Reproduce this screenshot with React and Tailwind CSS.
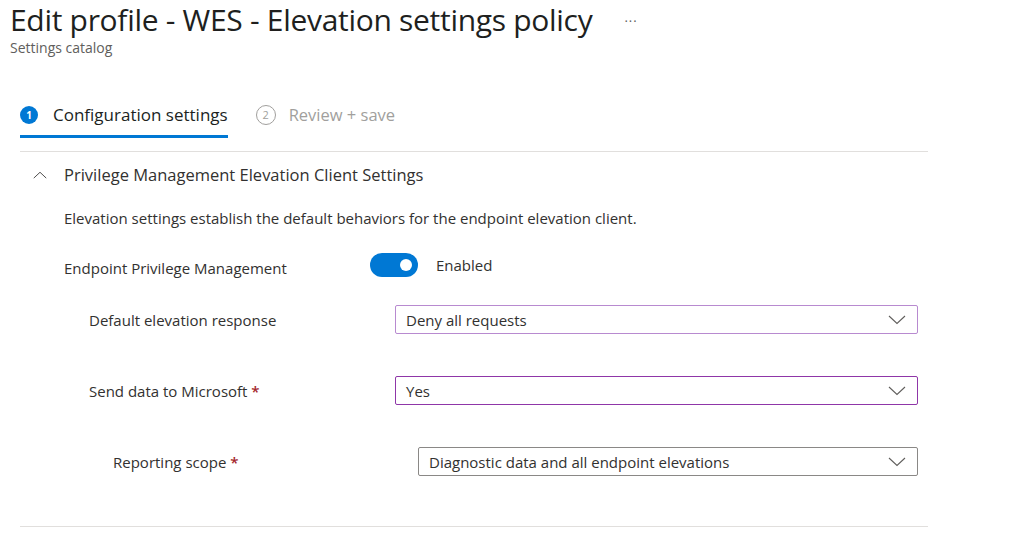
const font = { fontFamily: '"Open Sans", "Noto Sans", sans-serif' }

function Chevron({ up = false, className = '' }) {
  return (
    <svg viewBox="0 0 18 10" className={className} fill="none" stroke="currentColor" strokeWidth="1.1">
      <path d={up ? 'M1 9 L9 1.5 L17 9' : 'M1 1 L9 8.5 L17 1'} />
    </svg>
  )
}

function Select({ value, className = '', border = 'border-[#8a8886]' }) {
  return (
    <div className={`flex items-center justify-between h-[29px] border ${border} rounded-[2px] pl-[10px] pr-[11px] ${className}`}>
      <span className="text-[15px] leading-[20px] text-[#323130]">{value}</span>
      <Chevron className="w-[18px] h-[10px] text-[#605e5c]" />
    </div>
  )
}

export default function App() {
  return (
    <div className="w-[1024px] h-[539px] bg-white overflow-hidden text-[#323130] antialiased" style={font}>
      {/* header */}
      <div className="pl-[10px] pt-[1px]">
        <div className="flex items-center">
          <h1 className="text-[30px] leading-[38px] text-[#201f1e] tracking-[-0.3px]">Edit profile - WES - Elevation settings policy</h1>
          <span className="ml-[32px] mt-[4px] text-[13px] text-[#605e5c] tracking-[1px]">···</span>
        </div>
        <div className="text-[14px] leading-[18px] text-[#605e5c]">Settings catalog</div>
      </div>

      {/* wizard tabs */}
      <div className="ml-[20px] w-[908px] mt-[46px] border-b border-[#e1dfdd]">
        <div className="flex items-start">
          <div className="flex flex-col">
            <div className="flex items-center h-[24px]">
              <span className="w-[18px] h-[18px] rounded-full bg-[#0078d4] text-white text-[10px] font-bold flex items-center justify-center">1</span>
              <span className="ml-[15px] text-[17px] text-[#201f1e]">Configuration settings</span>
            </div>
            <div className="h-[3px] bg-[#0078d4] mt-[8px] mb-[13px]" />
          </div>
          <div className="flex items-center h-[24px] ml-[28px]">
            <span className="w-[20px] h-[20px] rounded-full border border-[#a19f9d] text-[#a19f9d] text-[11px] flex items-center justify-center">2</span>
            <span className="ml-[13px] text-[16.5px] text-[#a19f9d]">Review + save</span>
          </div>
        </div>
      </div>

      {/* section */}
      <div className="ml-[20px] w-[908px] border-b border-[#e1dfdd] pb-[50px]">
        <div className="flex items-center mt-[11px] h-[24px]">
          <Chevron up className="ml-[13px] w-[14px] h-[8px] text-[#323130]" />
          <span className="ml-[17px] text-[16.5px] text-[#323130]">Privilege Management Elevation Client Settings</span>
        </div>

        <div className="pl-[44px] mt-[21px] text-[15px] leading-[20px]">
          Elevation settings establish the default behaviors for the endpoint elevation client.
        </div>

        <div className="pl-[44px] mt-[23px] flex items-center">
          <span className="w-[306px] text-[15px] leading-[20px] pt-[7px]">Endpoint Privilege Management</span>
          <div className="w-[48px] h-[24px] rounded-full bg-[#0078d4] flex items-center justify-end pr-[6px]">
            <span className="w-[12px] h-[12px] rounded-full bg-white" />
          </div>
          <span className="ml-[18px] text-[15px] leading-[20px]">Enabled</span>
        </div>

        <div className="pl-[69px] mt-[27px] flex items-center">
          <span className="w-[306px] text-[15px] leading-[20px]">Default elevation response</span>
          <Select value="Deny all requests" className="w-[523px]" border="border-[#b88ad0]" />
        </div>

        <div className="pl-[69px] mt-[42px] flex items-center">
          <span className="w-[306px] text-[15px] leading-[20px]">
            Send data to Microsoft <span className="text-[#a4262c] font-semibold">*</span>
          </span>
          <Select value="Yes" className="w-[523px]" border="border-[#8f36a8]" />
        </div>

        <div className="pl-[93px] mt-[42px] flex items-center">
          <span className="w-[305px] text-[15px] leading-[20px]">
            Reporting scope <span className="text-[#a4262c] font-semibold">*</span>
          </span>
          <Select value="Diagnostic data and all endpoint elevations" className="w-[500px]" />
        </div>
      </div>
    </div>
  )
}
